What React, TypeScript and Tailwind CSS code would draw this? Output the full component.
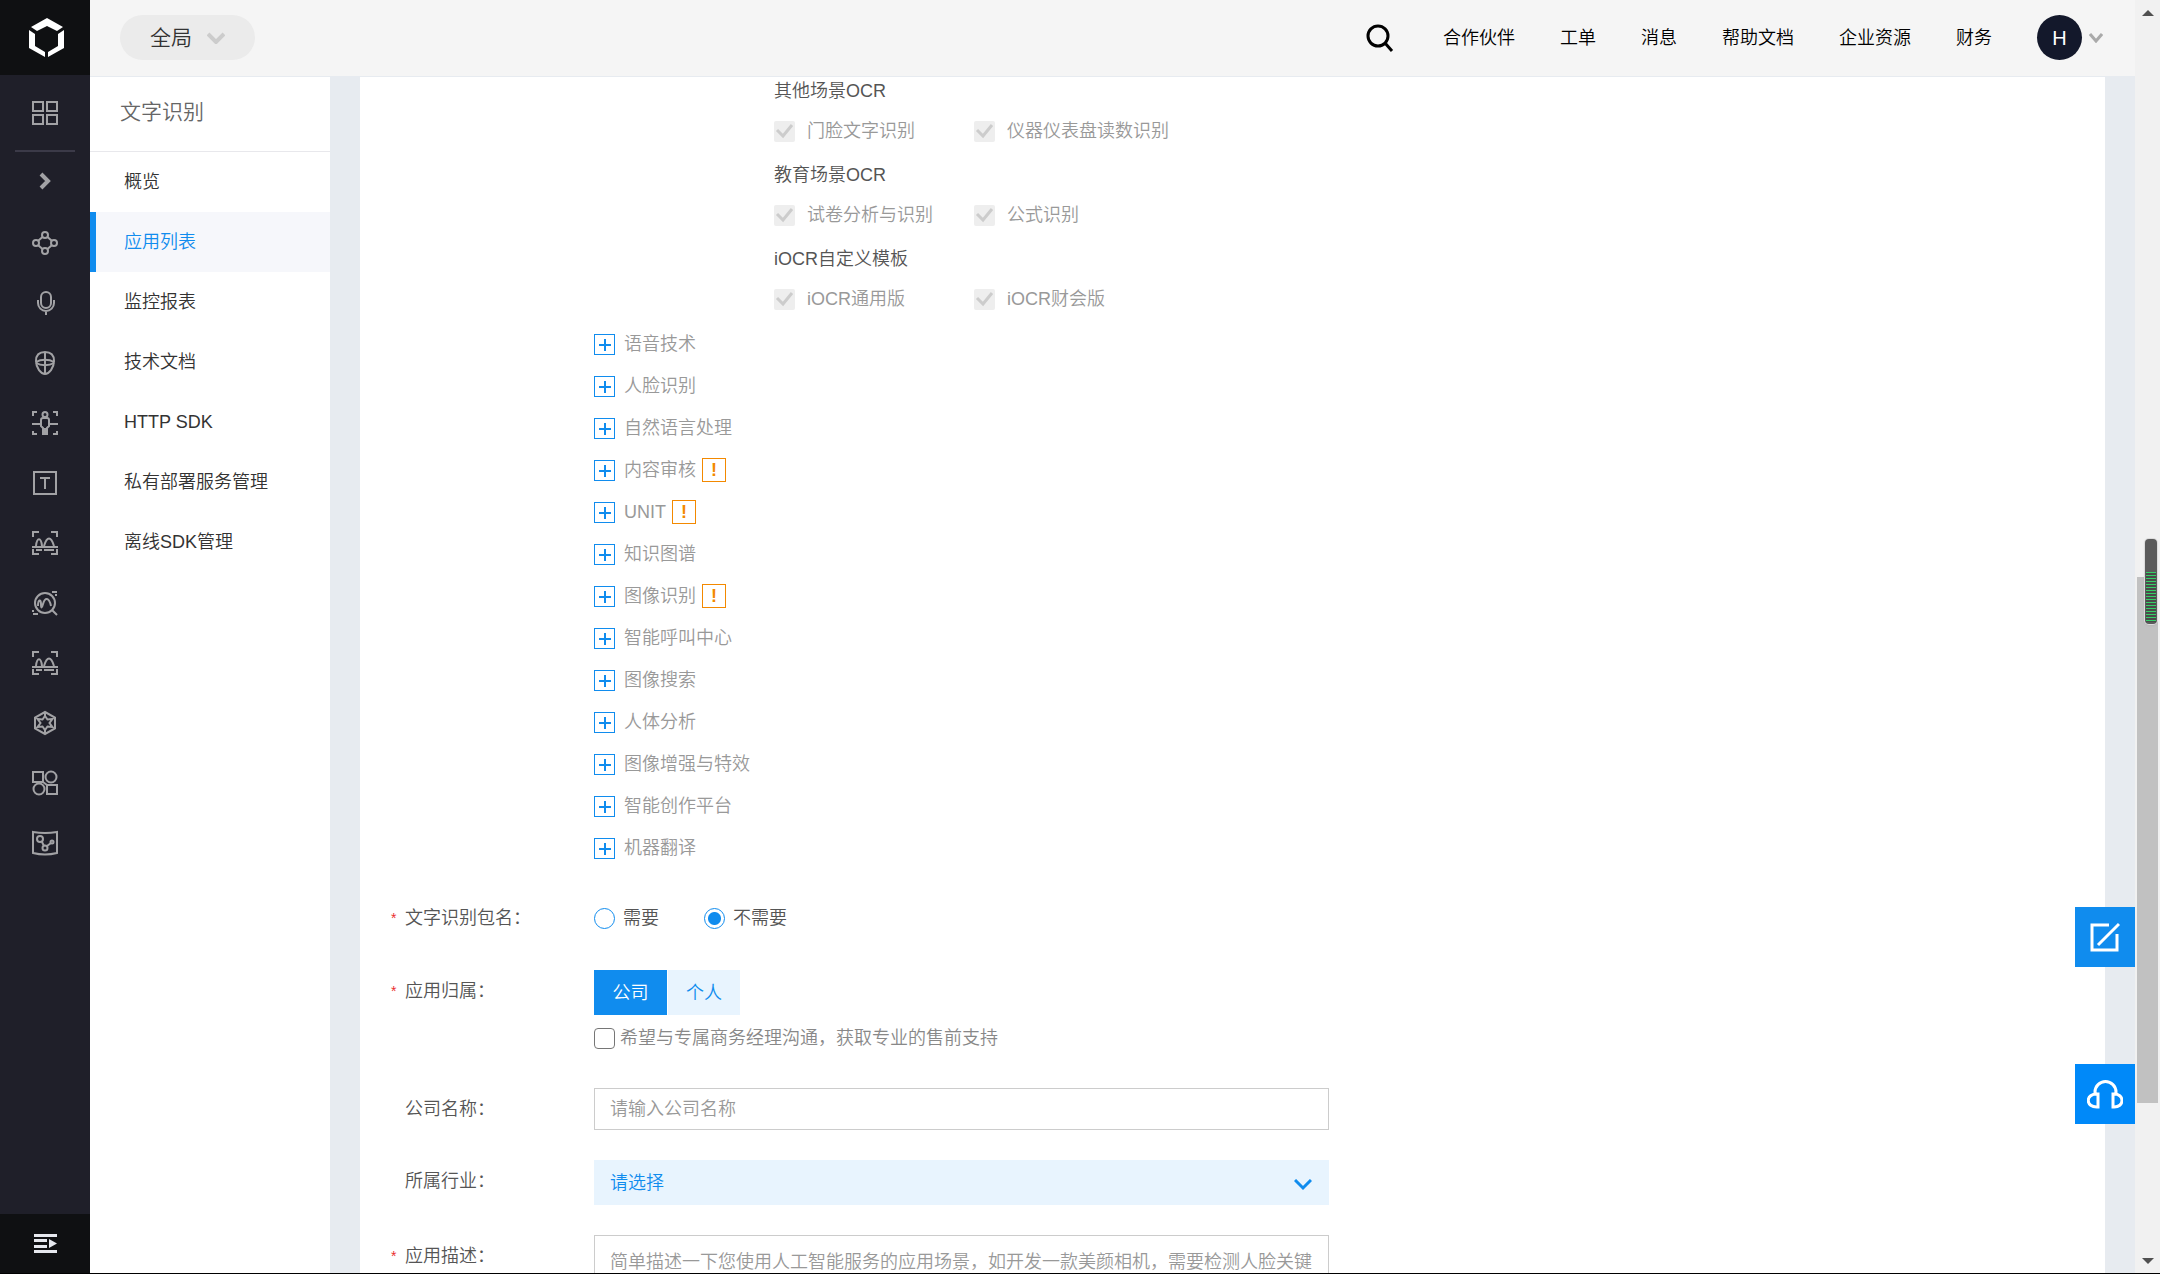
import React from 'react';
import clsx from 'clsx';

const sideItems = ['概览', '应用列表', '监控报表', '技术文档', 'HTTP SDK', '私有部署服务管理', '离线SDK管理'];

const topLinks = ['合作伙伴', '工单', '消息', '帮助文档', '企业资源', '财务'];

const ocrGroups = [
  { title: '其他场景OCR', items: ['门脸文字识别', '仪器仪表盘读数识别'] },
  { title: '教育场景OCR', items: ['试卷分析与识别', '公式识别'] },
  { title: 'iOCR自定义模板', items: ['iOCR通用版', 'iOCR财会版'] },
];

const services = [
  { name: '语音技术' },
  { name: '人脸识别' },
  { name: '自然语言处理' },
  { name: '内容审核', warn: true },
  { name: 'UNIT', warn: true },
  { name: '知识图谱' },
  { name: '图像识别', warn: true },
  { name: '智能呼叫中心' },
  { name: '图像搜索' },
  { name: '人体分析' },
  { name: '图像增强与特效' },
  { name: '智能创作平台' },
  { name: '机器翻译' },
];

const scanCorners = 'M1 6V1H7M19 1H25V6M25 18V23H19M7 23H1V18';

const railIcons: { label: string; art: React.ReactNode }[] = [
  {
    label: '知识',
    art: (
      <>
        <circle cx="13" cy="4" r="3" />
        <circle cx="13" cy="20" r="3" />
        <circle cx="4" cy="12" r="3" />
        <circle cx="22" cy="12" r="3" />
        <path d="M10.500 6 6.500 9.500M15.500 6l4 3.500M6.500 14.500l4 3.500M19.500 14.500l-4 3.500" />
      </>
    ),
  },
  {
    label: '语音',
    art: (
      <>
        <rect x="9" y="1" width="10" height="16" rx="5" />
        <path d="M6 9v3a8 8 0 0 0 16 0V9M14 20v4" />
      </>
    ),
  },
  {
    label: '人脸',
    art: (
      <>
        <path d="M13 1C7 1 4 4 4 10c0 7 5 13 9 13s9-6 9-13c0-6-3-9-9-9zM13 1v22" />
        <path d="M4 11c5-3 13-3 18 0M4 12c5 3 13 3 18 0" />
      </>
    ),
  },
  {
    label: '人体',
    art: (
      <>
        <path d="M1 5V1H5M21 1H25V5M25 20V23H21M5 23H1V20M0 13H9M17 13H26" />
        <circle cx="13" cy="3.500" r="2.500" />
        <path d="M11 7h4a2 2 0 0 1 2 2v6l-2 2v6h-4v-6l-2-2V9a2 2 0 0 1 2-2zM13 17v6" />
      </>
    ),
  },
  {
    label: '文字',
    art: <path d="M2 1H24V23H2ZM8 7H18M13 7V18" />,
  },
  {
    label: '图像',
    art: (
      <>
        <path d={scanCorners} />
        <path d="M0 16H26M4 19H10M12 19H22M4 15C5 6 9 6 10 15M12 15C15 5 19 5 22 15" />
      </>
    ),
  },
  {
    label: '搜索',
    art: (
      <>
        <circle cx="13" cy="12" r="10" />
        <path d="M20 19l5 5M6 15c0-7 3-7 3-2s1 4 2 0c2-7 6-7 8 2M20 1h5M23 4h2M0 20h2M1 23h5" />
      </>
    ),
  },
  {
    label: '视频',
    art: (
      <>
        <path d={scanCorners} />
        <path d="M0 16H26M4 19H10M12 19H22M4 15C5 6 9 6 10 15M12 15C15 5 19 5 22 15" />
      </>
    ),
  },
  {
    label: '智能',
    art: (
      <>
        <path d="M13 1 23 6.500V17.500L13 23 3 17.500V6.500Z" />
        <path d="M13 5l2.500 3.500 5-.5-3 4 3 4-5-.5L13 19l-2.500-3.500L5.500 16l3-4-3-4 5 .5ZM13 1V5M13 19V23" />
      </>
    ),
  },
  {
    label: '更多',
    art: (
      <>
        <path d="M1 1H11V11H1ZM15 14H25V23H15ZM11 11L15 14" />
        <circle cx="19" cy="6" r="5.500" />
        <circle cx="7" cy="18" r="5.500" />
      </>
    ),
  },
  {
    label: '数据',
    art: (
      <>
        <path d="M1 1Q13 3 25 1V22Q13 25 1 22Z" />
        <circle cx="8" cy="8" r="3" />
        <circle cx="13" cy="17" r="2.500" />
        <circle cx="20" cy="11" r="1.500" />
        <path d="M10 11l2 4M15 15l4-3" />
      </>
    ),
  },
];

function RailIcon({ children }: { children: React.ReactNode }) {
  return (
    <svg width="26" height="24" viewBox="0 0 26 24" fill="none" stroke="#a2a2a5" strokeWidth="2" className="overflow-visible">
      {children}
    </svg>
  );
}

function Rail() {
  return (
    <nav className="w-[90px] shrink-0 bg-[#1f1f29] flex flex-col">
      <a href="#" aria-label="首页" className="h-[75px] bg-[#0f1012] flex items-center justify-center pl-1">
        <svg width="36" height="40" viewBox="0 0 36 40" fill="#fff">
          <path d="M18 0 34 9 28 13 18 8 8 13 2 9Z" />
          <path d="M0 12l6 4v12l10 6v5L0 30Z" />
          <path d="M35 12l-6 4v12l-10 6v5l16-9Z" />
        </svg>
      </a>
      <button aria-label="产品服务" className="h-[75px] flex items-center justify-center">
        <RailIcon>
          <path d="M1 1H11V10H1ZM15 1H25V10H15ZM1 14H11V23H1ZM15 14H25V23H15Z" />
        </RailIcon>
      </button>
      <hr className="mx-[15px] border-0 h-[2px] bg-[#3b3a48]" />
      <button aria-label="展开" className="h-[61px] pb-1 flex items-center justify-center">
        <svg width="14" height="20" viewBox="0 0 14 20" fill="none" stroke="#a2a2a5" strokeWidth="4">
          <path d="M3 3l7 7-7 7" />
        </svg>
      </button>
      {railIcons.map((icon) => (
        <button key={icon.label} aria-label={icon.label} className="h-[60px] flex items-center justify-center">
          <RailIcon>{icon.art}</RailIcon>
        </button>
      ))}
      <button aria-label="展开菜单" className="mt-auto h-[59px] bg-[#0f1012] flex items-center justify-center">
        <svg width="23" height="19" viewBox="0 0 23 19" fill="#e6e8ee">
          <path d="M0 0H23V3H0ZM0 5H13V8H0ZM0 11H13V14H0ZM0 16H23V19H0ZM15 5 23 9.500 15 14Z" />
        </svg>
      </button>
    </nav>
  );
}

function Header() {
  return (
    <header className="h-[77px] shrink-0 bg-[#f5f5f5] border-b border-[#e7ebf0] flex items-center justify-between pl-[30px] pr-[32px] pb-px">
      <button className="h-[45px] w-[135px] rounded-full bg-[#ebebeb] flex items-center gap-[15px] pl-[30px] text-[21px] text-[#333]">
        全局
        <svg width="18" height="12" viewBox="0 0 18 12" fill="none" stroke="#ccc" strokeWidth="4">
          <path d="M1 2l8 8 8-8" />
        </svg>
      </button>
      <div className="flex items-center gap-[45px] text-lg text-black">
        <button aria-label="搜索" className="pr-1">
          <svg width="28" height="28" viewBox="0 0 28 28" fill="none" stroke="#000" strokeWidth="3">
            <circle cx="12" cy="12" r="10" />
            <path d="M19 19l7 8" />
          </svg>
        </button>
        {topLinks.map((link) => (
          <a key={link} href="#">{link}</a>
        ))}
        <button aria-label="账号" className="flex items-center gap-[7px]">
          <span className="size-[45px] rounded-full bg-[#13182b] text-white text-xl flex items-center justify-center">H</span>
          <svg width="14" height="10" viewBox="0 0 14 10" fill="none" stroke="#aaa" strokeWidth="3">
            <path d="M1 1l6 7 6-7" />
          </svg>
        </button>
      </div>
    </header>
  );
}

function SideMenu() {
  return (
    <aside className="w-[240px] shrink-0 bg-white">
      <h2 className="h-[75px] pl-[30px] pb-1 border-b border-[#e8e8ec] flex items-center text-[21px] text-[#666]">文字识别</h2>
      {sideItems.map((item, index) => (
        <a
          key={item}
          href="#"
          className={clsx(
            'h-[60px] flex items-center border-l-[6px] pl-7 text-lg',
            index === 1 ? 'border-[#108cee] bg-[#f6f7fb] text-[#108cee]' : 'border-transparent text-[#333]'
          )}
        >
          {item}
        </a>
      ))}
    </aside>
  );
}

function OcrGroup({ title, items }: { title: string; items: string[] }) {
  return (
    <fieldset className="h-[84px]">
      <legend className="h-10 leading-10 text-[#555]">{title}</legend>
      <div className="flex h-10 items-center">
        {items.map((item) => (
          <label key={item} className="min-w-[200px] flex items-center gap-3 whitespace-nowrap text-[#999]">
            <span className="relative size-[21px]">
              <input type="checkbox" defaultChecked disabled className="block size-[21px] appearance-none rounded-xs bg-[#eee]" />
              <svg className="absolute inset-0" width="21" height="21" viewBox="0 0 21 21" fill="none" stroke="#ccc" strokeWidth="3">
                <path d="M3 9l6 6 9-11" />
              </svg>
            </span>
            {item}
          </label>
        ))}
      </div>
    </fieldset>
  );
}

function ServiceRow({ name, warn }: { name: string; warn?: boolean }) {
  return (
    <li className="h-[42px] flex items-center">
      <button aria-label={'展开' + name} className="size-[21px] border border-[#108cee]">
        <svg width="19" height="19" viewBox="0 0 19 19" fill="none" stroke="#108cee" strokeWidth="2">
          <path d="M4 10H16M10 4V16" />
        </svg>
      </button>
      <span className="ml-[9px] text-[#999]">{name}</span>
      {warn && (
        <span className="ml-[6px] size-6 border border-[#f38900] text-[#f38900] font-bold flex items-center justify-center">!</span>
      )}
    </li>
  );
}

interface FieldProps {
  label: string;
  htmlFor?: string;
  required?: boolean;
  className?: string;
  children: React.ReactNode;
}

function Field({ label, htmlFor, required, className, children }: FieldProps) {
  return (
    <div className={clsx('flex items-start', className)}>
      <label htmlFor={htmlFor} className="w-[234px] shrink-0 flex leading-[42px] text-[#555]">
        <span className="w-[45px] shrink-0 pl-[31px] text-sm leading-[42px] text-[#ea2e2e]">{required && '*'}</span>
        {label}：
      </label>
      <div className="flex-1 max-w-[735px]">{children}</div>
    </div>
  );
}

const radioClass =
  'size-[21px] appearance-none rounded-full border border-[#108cee] checked:bg-[radial-gradient(circle,#108cee_6px,transparent_7px)]';

function AppForm() {
  return (
    <form className="flex-1 min-w-0 bg-white overflow-hidden text-lg">
      <div className="pl-[414px] -mt-[6px]">
        {ocrGroups.map((group) => (
          <OcrGroup key={group.title} {...group} />
        ))}
      </div>
      <ul className="pl-[234px]">
        {services.map((service) => (
          <ServiceRow key={service.name} {...service} />
        ))}
      </ul>

      <Field label="文字识别包名" required className="mt-[28px]">
        <div className="flex h-[42px] items-center gap-[45px] text-[#555]">
          <label className="flex items-center gap-2">
            <input type="radio" name="package" className={radioClass} />
            需要
          </label>
          <label className="flex items-center gap-2">
            <input type="radio" name="package" defaultChecked className={radioClass} />
            不需要
          </label>
        </div>
      </Field>

      <Field label="应用归属" required className="mt-[31px]">
        <div className="flex gap-px">
          <button type="button" className="h-[45px] w-[73px] bg-[#108cee] text-white">公司</button>
          <button type="button" className="h-[45px] w-[72px] bg-[#e8f4fe] text-[#108cee]">个人</button>
        </div>
        <label className="mt-[9px] flex items-center gap-[5px] text-[#888]">
          <input type="checkbox" className="size-[21px] appearance-none rounded-sm border border-[#767676]" />
          希望与专属商务经理沟通，获取专业的售前支持
        </label>
      </Field>

      <Field label="公司名称" htmlFor="company" className="mt-[36px]">
        <input
          id="company"
          type="text"
          placeholder="请输入公司名称"
          className="block h-[42px] w-full border border-[#ccc] px-[15px] outline-none placeholder:text-[#999]"
        />
      </Field>

      <Field label="所属行业" htmlFor="industry" className="mt-[30px]">
        <div className="relative">
          <select id="industry" className="block h-[45px] w-full appearance-none bg-[#e8f4fe] px-4 text-[#108cee]">
            <option>请选择</option>
          </select>
          <svg className="absolute right-[17px] top-[19px] pointer-events-none" width="18" height="12" viewBox="0 0 18 12" fill="none" stroke="#108cee" strokeWidth="3">
            <path d="M1 1l8 8 8-8" />
          </svg>
        </div>
      </Field>

      <Field label="应用描述" htmlFor="desc" required className="mt-[30px]">
        <textarea
          id="desc"
          placeholder="简单描述一下您使用人工智能服务的应用场景，如开发一款美颜相机，需要检测人脸关键点"
          className="block h-[150px] w-full resize-none border border-[#ccc] pl-[15px] pr-2 py-3 outline-none placeholder:text-[#999]"
        />
      </Field>
    </form>
  );
}

function FloatingTools() {
  return (
    <div className="absolute right-[25px] bottom-[149px] flex flex-col gap-[97px]">
      <button aria-label="反馈" className="size-[60px] bg-[#108cee] flex items-center justify-center">
        <svg width="30" height="30" viewBox="0 0 30 30" fill="none" stroke="#fff" strokeWidth="3">
          <path d="M19 3H2V28H27V12M8 23L29 2" />
        </svg>
      </button>
      <button aria-label="在线咨询" className="size-[60px] bg-[#0089f9] flex items-center justify-center">
        <svg width="36" height="30" viewBox="0 0 36 30" fill="none" stroke="#fff" strokeWidth="3">
          <path d="M8 16V13a10.500 10.500 0 0 1 21 0v3M11 15v13c-13 1-13-14 0-13zM26 15v13c12 1 12-14 0-13z" />
        </svg>
      </button>
    </div>
  );
}

function ScrollTrack() {
  return (
    <div className="relative w-[25px] shrink-0 bg-[#f1f1f1] flex flex-col items-center">
      <svg className="mt-[10px]" width="12" height="6" viewBox="0 0 12 6" fill="#505050">
        <path d="M0 6 6 0 12 6Z" />
      </svg>
      <div className="grow-[561]" />
      <div className="grow-[526] w-[21px] bg-[#c1c1c1]" />
      <div className="grow-[155]" />
      <svg className="mb-[9px]" width="12" height="6" viewBox="0 0 12 6" fill="#505050">
        <path d="M0 0 6 6 12 0Z" />
      </svg>
      <div className="absolute right-[3px] top-[539px] h-[85px] w-3 rounded-[4px] bg-[#5a5a5a] px-px pt-[33px] pb-[2px] ring-1 ring-[#dcdcdc] shadow">
        <div className="h-full bg-[repeating-linear-gradient(#35cf66_0_1px,#4a4a4a_1px_3px)]" />
      </div>
    </div>
  );
}

export default function App() {
  return (
    <div className="relative flex h-screen overflow-hidden border-b border-black bg-[#e7ebf0] font-['Liberation_Sans','Noto_Sans_CJK_SC',sans-serif] font-[350]">
      <Rail />
      <div className="flex-1 min-w-0 flex flex-col">
        <Header />
        <main className="flex-1 min-h-0 flex">
          <SideMenu />
          <div className="flex-1 min-w-0 flex px-[30px]">
            <AppForm />
          </div>
        </main>
      </div>
      <ScrollTrack />
      <FloatingTools />
    </div>
  );
}
